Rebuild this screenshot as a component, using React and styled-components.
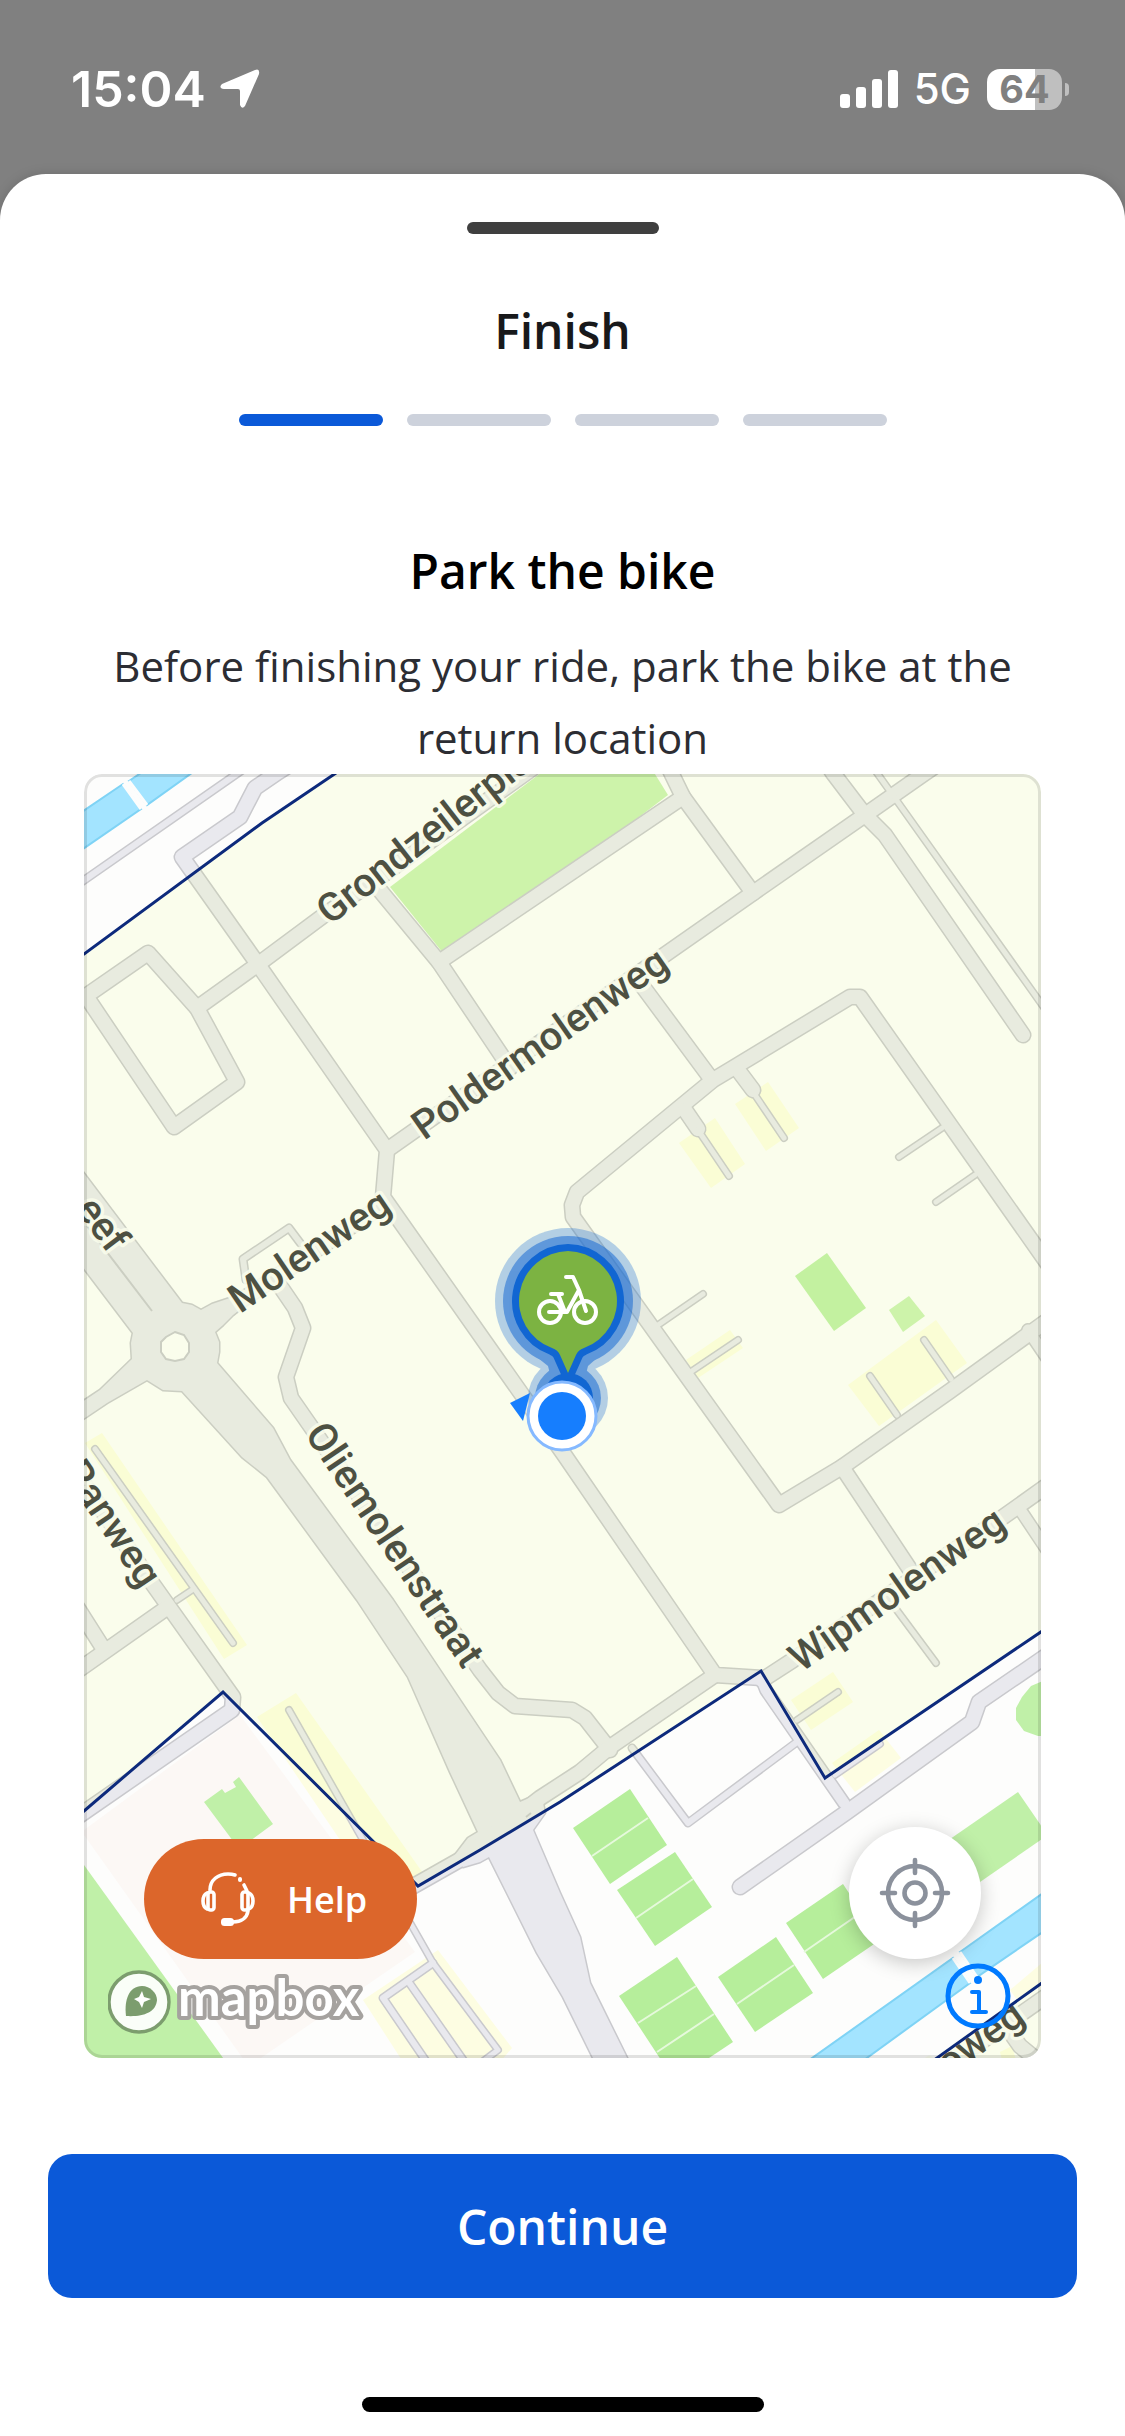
import React from "react";
import styled, { createGlobalStyle } from "styled-components";

const GlobalStyle = createGlobalStyle`
	* {
		box-sizing: border-box;
	}
	body {
		margin: 0;
		background: #808080;
		font-family: "Open Sans", "Noto Sans", sans-serif;
	}
	button {
		font-family: inherit;
		border: 0;
		cursor: pointer;
	}
`;

const Page = styled.div`
	display: flex;
	flex-direction: column;
	min-height: 100vh;
	background: #808080;
`;

const StatusBar = styled.header`
	display: flex;
	align-items: center;
	justify-content: space-between;
	height: 174px;
	padding: 4px 56px 0 71px;
	color: #fff;
	font-family: Inter, "Liberation Sans", sans-serif;
`;

const StatusGroup = styled.div`
	display: flex;
	align-items: center;
	gap: ${({ $gap }) => $gap}px;
`;

const Time = styled.span`
	font-size: 50px;
	font-weight: 600;
	line-height: 60px;
`;

const Network = styled.span`
	font-size: 42px;
	font-weight: 500;
	line-height: 60px;
`;

const Battery = styled.div`
	display: flex;
	align-items: center;
	gap: 3px;
`;

const BatteryLevel = styled.span`
	display: flex;
	align-items: center;
	justify-content: center;
	width: 75px;
	height: 41px;
	border-radius: 13px;
	background: linear-gradient(90deg, #fff 64%, #bfbfbf 64%);
	color: #808080;
	font-size: 38px;
	font-weight: 700;
	line-height: 41px;
`;

const BatteryCap = styled.span`
	width: 4px;
	height: 13px;
	border-radius: 0 4px 4px 0;
	background: #bfbfbf;
`;

const Sheet = styled.main`
	display: flex;
	flex: 1;
	flex-direction: column;
	align-items: center;
	padding: 48px 48px 24px;
	border-radius: 46px 46px 0 0;
	background: #fff;
	box-shadow: 0 0 12px rgba(0, 0, 0, 0.15);
`;

const Handle = styled.div`
	width: 192px;
	height: 12px;
	border-radius: 6px;
	background: #3f3f3f;
`;

const Title = styled.h1`
	margin: 65px 0 51px;
	color: #18191b;
	font-size: 48px;
	font-weight: 600;
	line-height: 64px;
`;

const Steps = styled.ol`
	display: flex;
	gap: 24px;
	margin: 0;
	padding: 0;
	list-style: none;
`;

const Step = styled.li`
	width: 144px;
	height: 12px;
	border-radius: 6px;
	background: ${({ $active }) => ($active ? "#0b59d8" : "#cdd2dc")};
`;

const Heading = styled.h2`
	margin: 113px 0 27px;
	color: #000;
	font-size: 48px;
	font-weight: 600;
	line-height: 64px;
`;

const Text = styled.p`
	margin: 0;
	padding: 0 36px;
	color: #2c2d33;
	font-size: 42px;
	line-height: 72px;
	text-align: center;
`;

const MapFrame = styled.section`
	position: relative;
	align-self: stretch;
	margin: 0 36px 96px;
	border-radius: 18px;
	overflow: hidden;

	&::after {
		content: "";
		position: absolute;
		inset: 0;
		border: 3px solid rgba(0, 0, 0, 0.11);
		border-radius: 18px;
		pointer-events: none;
	}
`;

const MapCanvas = styled.svg`
	display: block;
	width: 100%;
	height: auto;
`;

const HelpButton = styled.button`
	position: absolute;
	left: 60px;
	bottom: 99px;
	display: flex;
	align-items: center;
	gap: 32px;
	height: 120px;
	padding: 0 50px 0 57px;
	border-radius: 60px;
	background: #dc662b;
	color: #fff;
	font-size: 36px;
	font-weight: 600;
`;

const LocateButton = styled.button`
	position: absolute;
	right: 60px;
	bottom: 99px;
	display: flex;
	align-items: center;
	justify-content: center;
	width: 132px;
	height: 132px;
	padding: 0;
	border-radius: 50%;
	background: #fff;
	box-shadow: 0 4px 20px rgba(0, 0, 0, 0.22);
`;

const InfoButton = styled.button`
	position: absolute;
	right: 30px;
	bottom: 29px;
	width: 66px;
	height: 66px;
	padding: 0;
	background: none;
`;

const MapboxLink = styled.a`
	position: absolute;
	left: 24px;
	bottom: 20px;
	line-height: 0;
`;

const ContinueButton = styled.button`
	align-self: stretch;
	height: 144px;
	border-radius: 24px;
	background: #0b59d8;
	color: #fff;
	font-size: 48px;
	font-weight: 600;
`;

const HomeIndicator = styled.div`
	width: 402px;
	height: 15px;
	margin-top: 99px;
	border-radius: 8px;
	background: #000;
`;

const WIDE = 17,
	MEDIUM = 14,
	NARROW = 9;

const roads = [
	// north west
	[NARROW, "M70 890 L238 773 L260 758"],
	[WIDE, "M300 758 L277 773 L255 788 L240 817 L182 857 L257 963 L387 1150 L383 1197 L563 1453 L715 1675 L762 1678"],
	[WIDE, "M197 1008 L257 965 L327 913 L380 877 L540 763"],
	[WIDE, "M86 996 L148 953 L197 1008 L237 1082 L174 1127 Z"],
	[WIDE, "M373 882 L439 962 L510 1068"],
	[WIDE, "M439 962 L683 797"],
	[WIDE, "M665 760 L683 797 L753 893"],
	[WIDE, "M387 1150 L663 956 L753 893 L865 815 L925 773 L950 756"],
	[WIDE, "M823 758 L833 773 L855 802 L865 815 L885 835 L1023 1035"],
	[8, "M867 758 L877 773 L897 801 L1055 1023"],
	// block in the east
	[WIDE, "M635 976 L712 1080"],
	[WIDE, "M1055 1274 L860 997 L850 997 L733 1068 L713 1080 L577 1192 L572 1205 L573 1217 L779 1505 L842 1467 L950 1391 L1055 1315"],
	[WIDE, "M738 1070 L753 1090"],
	[8, "M753 1092 L784 1138"],
	[WIDE, "M685 1110 L698 1129"],
	[8, "M698 1130 L729 1176"],
	[8, "M942 1128 L899 1157"],
	[8, "M975 1175 L936 1202"],
	[8, "M658 1325 L703 1294"],
	[8, "M692 1371 L738 1340"],
	[8, "M897 1415 L870 1376"],
	[8, "M951 1379 L924 1340"],
	[MEDIUM, "M1028 1330 L1055 1370"],
	[WIDE, "M842 1467 L915 1577"],
	[8, "M893 1605 L936 1663"],
	[WIDE, "M762 1680 L793 1660 L1003 1517 L1055 1480"],
	[MEDIUM, "M1019 1508 L1055 1562"],
	// Molenweg and Oliemolenstraat
	[WIDE, "M386 1203 L215 1318"],
	[NARROW, "M304 1248 L289 1228 L243 1259 L246 1280"],
	[WIDE, "M278 1283 L295 1308 L303 1328 L286 1377 L291 1398 L480 1670 L498 1693 L515 1706 L572 1710 L585 1718 L610 1750"],
	[WIDE, "M715 1675 L610 1747 L580 1772 L540 1798 L463 1858 L410 1888"],
	// south west
	[WIDE, "M84 1484 L152 1583 L233 1697 L232 1710 L70 1822"],
	[WIDE, "M168 1607 L70 1676"],
	[WIDE, "M70 1596 L103 1648"],
	[8, "M192 1590 L177 1600"],
	[8, "M95 1449 L233 1643"],
	[8, "M289 1710 L433 1963 M433 1963 L498 2050 L482 2062"],
	[NARROW, "M433 1963 L383 1998 L428 2064"],
	[NARROW, "M408 1981 L466 2064"],
	// south east
	[NARROW, "M632 1748 L688 1823 L797 1742"],
	[MEDIUM, "M762 1680 L766 1690 L844 1803"],
	[WIDE, "M740 1887 L847 1812 L972 1722 L979 1702 L1055 1650"],
	[8, "M797 1720 L838 1692"],
	[8, "M835 1775 L880 1744"],
	[WIDE, "M1055 1990 L975 2046"],
	[WIDE, "M1006 2026 L1020 2046 L1042 2064"],
];

const mainRoad =
	"M70 1155 L182 1303 L192 1305 L201 1310 L212 1304 L236 1296 L244 1306 L233 1315 L223 1325 L215 1332 L219 1342 L219 1352 L217 1363 L273 1428 L290 1460 L393 1600 L500 1760 L520 1802 L541 1793 L545 1813 L533 1830 L560 1893 L580 1937 L590 1983 L632 2068 L598 2068 L563 1997 L537 1953 L489 1857 L480 1862 L463 1867 L455 1855 L468 1838 L478 1832 L450 1772 L408 1677 L357 1600 L267 1477 L242 1457 L182 1391 L163 1390 L147 1380 L107 1403 L70 1428 L70 1410 L100 1390 L132 1359 L131 1343 L133 1333 L70 1250 Z";

const parking = [
	"679,1143 715,1118 745,1164 711,1188",
	"735,1104 768,1082 799,1128 766,1151",
	"686,1360 730,1330 743,1348 698,1378",
	"848,1385 936,1320 967,1363 879,1426",
	"85,1443 102,1433 247,1645 224,1659",
	"257,1717 296,1693 425,1876 384,1905",
	"363,2000 438,1950 512,2048 500,2062 403,2062",
	"791,1700 833,1672 853,1702 811,1730",
	"832,1763 879,1730 901,1758 855,1792",
	"1010,1990 1042,1963 1042,1983 1017,2000",
	"1000,2052 1012,2046 1016,2060 1002,2060",
];

const lawns = [
	"795,1276 827,1253 866,1308 834,1331",
	"204,1802 222,1789 225,1793 236,1787 233,1782 239,1777 273,1824 250,1841 233,1841",
	"84,1865 226,2062 84,2062",
	"1045,1680 1031,1686 1022,1697 1016,1708 1016,1720 1024,1731 1038,1736 1045,1736",
	"1018,1792 1042,1827 1042,1839 967,1891 940,1846",
];

const fields = [
	"573,1828 630,1789 667,1845 610,1884",
	"617,1890 675,1852 712,1907 655,1946",
	"619,1996 677,1957 733,2042 706,2060 661,2060",
	"718,1977 776,1937 813,1993 755,2032",
	"786,1923 843,1884 880,1940 823,1979",
];

const water = [
	"70,820 123,784 141,809 70,858",
	"129,781 160,760 210,760 147,805",
	"805,2063 953,1958 970,1983 860,2063",
	"960,1952 1050,1888 1050,1927 977,1977",
];

const labels = [
	{ text: "Grondzeilerpla", x: 330, y: 926, angle: -38 },
	{ text: "Poldermolenweg", x: 424, y: 1141, angle: -35 },
	{ text: "Molenweg", x: 240, y: 1314, angle: -34 },
	{ text: "eef", x: 109, y: 1255, angle: 53, anchor: "end" },
	{ text: "Ranweg", x: 141, y: 1590, angle: 56, anchor: "end" },
	{ text: "Oliemolenstraat", x: 304, y: 1434, angle: 56 },
	{ text: "Wipmolenweg", x: 801, y: 1673, angle: -35 },
	{ text: "toweg", x: 1027, y: 2021, angle: -36, anchor: "end" },
];

const zone =
	"M70 964 L84 954 L262 823 L336 773 L360 756 L1060 756 L1060 1619 L825 1778 L761 1671 L560 1802 L480 1850 L418 1886 L223 1692 L84 1811 L70 1823 Z";
const southZone = "M930 2063 L1060 1970 L1060 2063 Z";
const pin =
	"M568 1251 A50 50 0 0 1 584 1348 Q578 1350 576 1355 L568 1373 L560 1355 Q558 1350 552 1348 A50 50 0 0 1 568 1251 Z";

const StreetMap = () => (
	<MapCanvas viewBox="84 774 957 1284" role="img" aria-label="Map of the return location">
		<rect x="84" y="774" width="957" height="1284" fill="#fdfdfc" />
		<polygon points="84,1830 240,1715 415,1952 258,2060 244,2060 84,1835" fill="#fcf8f5" />
		{water.map((points) => (
			<polygon key={points} points={points} fill="#a3e4ff" stroke="#7fd3f5" strokeWidth="2" />
		))}
		<path d="M123 784 L141 809 M129 781 L147 805 M953 1958 L970 1983 M960 1952 L977 1977" stroke="#fdfdfc" strokeWidth="3" />
		<polygon points="390,887 443,953 580,862 668,795 650,766 550,766" fill="#cbf2b3" />
		<polygon points="889,1310 909,1296 925,1316 903,1332" fill="#cbf2b3" />
		{lawns.map((points) => (
			<polygon key={points} points={points} fill="#c0f0a8" />
		))}
		{fields.map((points) => (
			<polygon key={points} points={points} fill="#b6ee9b" />
		))}
		<path
			d="M592 1856 L648 1818 M636 1918 L693 1879 M638 2023 L696 1986 M657 2052 L714 2014 M737 2004 L794 1965 M804 1952 L862 1912"
			stroke="#e6f9dc"
			strokeWidth="2"
		/>
		{parking.map((points) => (
			<polygon key={points} points={points} fill="#fdfde2" />
		))}

		<g fill="none" stroke="#c9c9cd" strokeLinecap="round" strokeLinejoin="round">
			{roads.map(([width, d]) => (
				<path key={d} d={d} strokeWidth={width} />
			))}
			<path d={mainRoad} strokeWidth="3" />
		</g>
		<g fill="none" stroke="#e9e9ee" strokeLinecap="round" strokeLinejoin="round">
			<path d={mainRoad} fill="#e9e9ee" stroke="none" />
			{roads.map(([width, d]) => (
				<path key={d} d={d} strokeWidth={width - 3} />
			))}
		</g>
		<path
			d="M175 1332 L184 1335 L189 1343 L189 1352 L184 1359 L175 1361 L166 1359 L161 1352 L161 1342 L166 1337 Z"
			fill="#fdfdfc"
			stroke="#c9c9cd"
			strokeWidth="2"
		/>
		<path d="M84 1222 L152 1311 M526 1817 L531 1813" stroke="#c9c9cd" strokeWidth="2" />

		<g fill="rgba(230, 252, 100, 0.1)">
			<path d={zone} />
			<path d={southZone} />
		</g>

		<g
			fill="#4d5042"
			stroke="rgba(250, 253, 236, 0.85)"
			strokeWidth="7"
			strokeLinejoin="round"
			paintOrder="stroke"
			fontFamily="Roboto, sans-serif"
			fontSize="40"
			fontWeight="500">
			{labels.map(({ text, x, y, angle, anchor }) => (
				<text key={text} transform={`translate(${x} ${y}) rotate(${angle})`} textAnchor={anchor}>
					{text}
				</text>
			))}
		</g>

		<g fill="none" stroke="#0d2a7c" strokeWidth="3">
			<path d={zone} />
			<path d={southZone} />
		</g>

		{/* selected bike with its halo */}
		<g fill="#1166d2">
			<g opacity="0.3">
				<circle cx="568" cy="1301" r="73" />
				<circle cx="568" cy="1398" r="40" />
			</g>
			<g opacity="0.52">
				<circle cx="568" cy="1301" r="65" />
				<circle cx="568" cy="1398" r="33" />
				<path d="M538 1358 H597 L588 1366 L585 1378 H551 L548 1366 Z" />
			</g>
			<circle cx="568" cy="1398" r="25" />
			<path d={pin} stroke="#1166d2" strokeWidth="14" strokeLinejoin="round" />
		</g>
		<path d={pin} fill="#7cb342" />
		<g fill="none" stroke="#fff" strokeWidth="4" strokeLinecap="round" strokeLinejoin="round">
			<circle cx="550" cy="1312" r="11" />
			<circle cx="585" cy="1312" r="11" />
			<path d="M549 1312 H567 L579 1290 M551 1294 H562 M558 1294 L565 1312 M566 1277 H573 L579 1290 L586 1311" />
		</g>

		{/* user position */}
		<path d="M510 1403 L530 1393 L523 1421 Z" fill="#167efe" />
		<circle cx="562" cy="1416" r="34" fill="#fff" stroke="#85b9ff" strokeWidth="3" />
		<circle cx="562" cy="1416" r="24" fill="#167efe" />
	</MapCanvas>
);

const LocationArrow = () => (
	<svg width="40" height="40" viewBox="0 0 40 40" fill="#fff" aria-hidden="true">
		<path d="M35 1 Q40 -1 39 5 L25 37 Q22 41 20 36 V22 Q20 20 18 20 H4 Q-2 19 2 15 Z" />
	</svg>
);

const Signal = () => (
	<svg width="58" height="38" viewBox="0 0 58 38" fill="#fff" aria-hidden="true">
		<rect x="0" y="24" width="10" height="14" rx="3" />
		<rect x="16" y="17" width="10" height="21" rx="3" />
		<rect x="32" y="9" width="10" height="29" rx="3" />
		<rect x="48" y="0" width="10" height="38" rx="3" />
	</svg>
);

const Headset = () => (
	<svg
		width="54"
		height="54"
		viewBox="0 0 54 54"
		fill="none"
		stroke="#fff"
		strokeWidth="3.6"
		strokeLinecap="round"
		aria-hidden="true">
		<path d="M9 18 C9 8 17 2 27 2 Q31 2 34 3 M43 13 L46 19" />
		<path d="M39 7 V8" strokeWidth="4" />
		<rect x="7" y="20" width="6" height="18" rx="2.5" />
		<rect x="41" y="20" width="6" height="18" rx="2.5" />
		<path d="M6 21 Q2 23 2 29 Q2 35 6 37 M48 21 Q52 23 52 29 Q52 35 48 37" />
		<path d="M47 39 C46 46 40 50 32 50" />
		<rect x="20" y="46" width="13" height="8" rx="3.5" fill="#fff" stroke="none" />
	</svg>
);

const Crosshair = () => (
	<svg
		width="72"
		height="72"
		viewBox="0 0 72 72"
		fill="none"
		stroke="#8b919c"
		strokeWidth="4.6"
		strokeLinecap="round"
		aria-hidden="true">
		<circle cx="36" cy="36" r="27" />
		<circle cx="36" cy="36" r="10.5" />
		<path d="M36 3 V16 M36 56 V69 M3 36 H16 M56 36 H69" />
	</svg>
);

const Info = () => (
	<svg width="66" height="66" viewBox="0 0 66 66" fill="none" stroke="#007aff" strokeLinecap="round" aria-hidden="true">
		<circle cx="33" cy="33" r="30" strokeWidth="5" />
		<circle cx="33" cy="17" r="4" fill="#007aff" stroke="none" />
		<path d="M27 29 H34 V49 M27 49 H41" strokeWidth="4" strokeLinejoin="round" />
	</svg>
);

const MapboxLogo = () => (
	<svg width="260" height="70" viewBox="0 0 260 70">
		<circle cx="31" cy="34" r="30" fill="rgba(255, 255, 255, 0.92)" stroke="#7c9d6e" strokeWidth="3.4" />
		<path d="M18 48 C16 32 21 18 34 18 C42 18 49 25 49 32 C48 45 34 49 18 48 Z" fill="#7c9d6e" />
		<path d="M34 23 L36 29 L43 31 L36 34 L34 40 L31 34 L26 31 L31 29 Z" fill="#fff" />
		<text
			x="70"
			y="48"
			fill="#fff"
			stroke="#a5a29f"
			strokeWidth="8"
			strokeLinejoin="round"
			paintOrder="stroke"
			fontFamily="Lato, sans-serif"
			fontSize="51"
			fontWeight="700">
			mapbox
		</text>
	</svg>
);

export default function App() {
	const steps = 4,
		[step, setStep] = React.useState(0);

	const handleContinue = () => {
		setStep((current) => Math.min(current + 1, steps - 1));
	};

	return (
		<Page>
			<GlobalStyle />
			<StatusBar>
				<StatusGroup $gap={14}>
					<Time>15:04</Time>
					<LocationArrow />
				</StatusGroup>
				<StatusGroup $gap={16}>
					<Signal />
					<Network>5G</Network>
					<Battery>
						<BatteryLevel>64</BatteryLevel>
						<BatteryCap />
					</Battery>
				</StatusGroup>
			</StatusBar>

			<Sheet>
				<Handle />
				<Title>Finish</Title>
				<Steps>
					{Array.from({ length: steps }, (_, i) => (
						<Step key={i} $active={i <= step} />
					))}
				</Steps>

				<Heading>Park the bike</Heading>
				<Text>Before finishing your ride, park the bike at the return location</Text>

				<MapFrame>
					<StreetMap />
					<HelpButton type="button">
						<Headset />
						Help
					</HelpButton>
					<LocateButton type="button" aria-label="Show my location">
						<Crosshair />
					</LocateButton>
					<MapboxLink href="#mapbox" aria-label="Mapbox">
						<MapboxLogo />
					</MapboxLink>
					<InfoButton type="button" aria-label="Map information">
						<Info />
					</InfoButton>
				</MapFrame>

				<ContinueButton type="button" onClick={handleContinue}>
					Continue
				</ContinueButton>
				<HomeIndicator />
			</Sheet>
		</Page>
	);
}
